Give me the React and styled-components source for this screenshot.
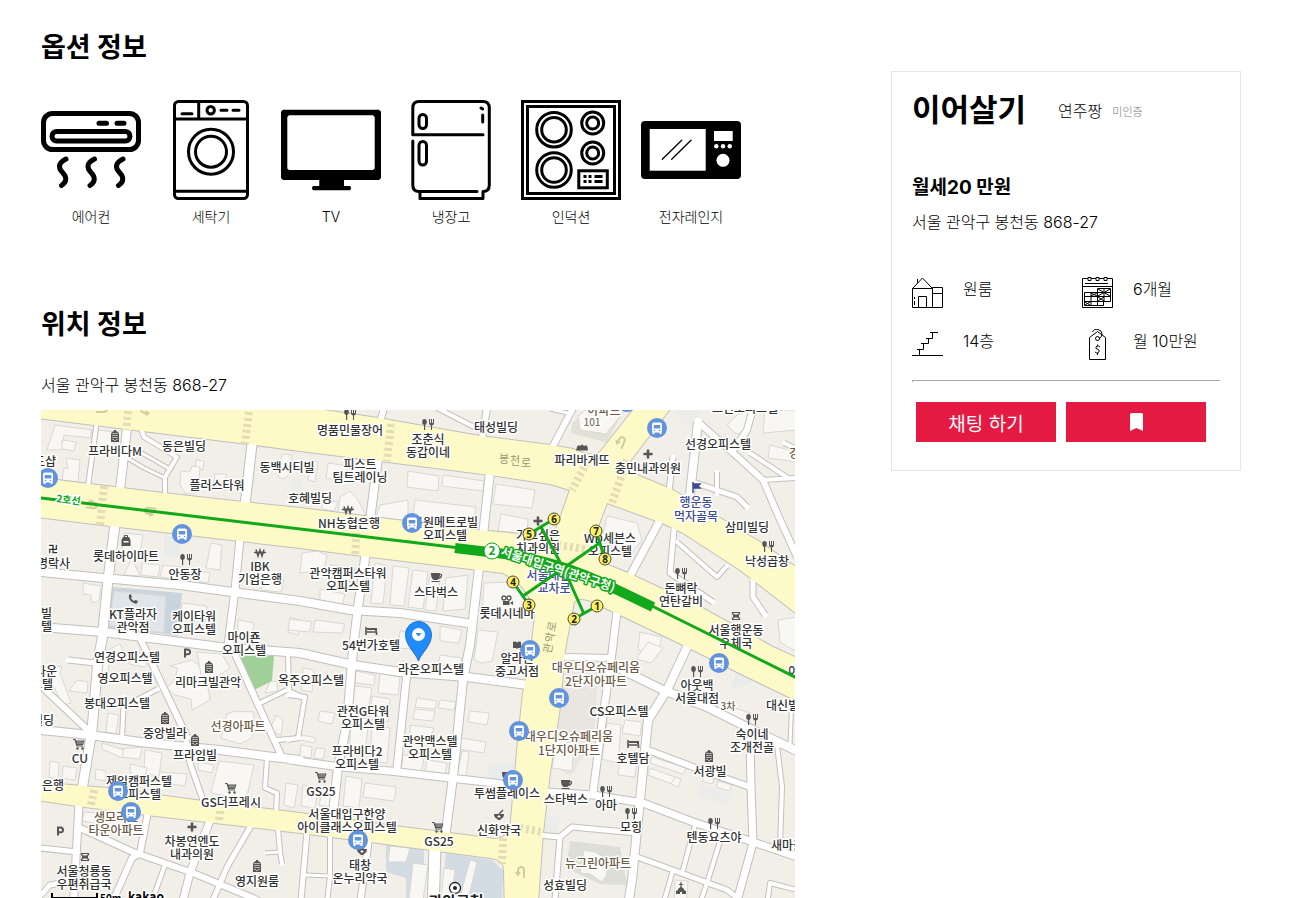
import React from "react";
import styled, { createGlobalStyle } from "styled-components";

const GlobalStyle = createGlobalStyle`
  *, *::before, *::after { box-sizing: border-box; }
  body {
    margin: 0;
    background: #fff;
    color: #000;
    font-family: Inter, "Noto Sans CJK KR", sans-serif;
    font-size: 16px;
    line-height: 24px;
  }
`;

/* ---------- page ---------- */

const Page = styled.div`
  display: grid;
  grid-template-columns: minmax(0, 1fr) 350px;
  column-gap: 96px;
  align-items: start;
  padding: 28px 59px 0 41px;
`;

const Main = styled.main`
  min-width: 0;
`;

const Section = styled.section`
  margin-bottom: ${(p) => (p.$last ? 0 : 78)}px;
`;

const SectionTitle = styled.h2`
  margin: 0;
  font-size: 27px;
  line-height: 40px;
  font-weight: 700;
`;

const OptionList = styled.ul`
  display: flex;
  flex-wrap: wrap;
  gap: 20px;
  margin: 32px 0 0;
  padding: 0;
  list-style: none;
`;

const Option = styled.li`
  display: flex;
  flex-direction: column;
  align-items: center;
  gap: 7px;
  width: 100px;
  font-size: 14px;
  line-height: 20px;
  font-weight: 300;
`;

const OptionIcon = styled.svg`
  display: block;
  width: 100px;
  height: 100px;
  fill: none;
  stroke: #000;
  stroke-width: ${(p) => p.$weight || 3};
  stroke-linecap: round;
  stroke-linejoin: round;
`;

const Address = styled.p`
  margin: ${(p) => p.$top}px 0 0;
  font-weight: 300;
`;

const MapFrame = styled.div`
  height: 500px;
  margin-top: 13px;
  overflow: hidden;
  background: #f2efe9;
`;

const MapCanvas = styled.svg`
  display: block;
  width: 100%;
  height: 100%;
`;

/* ---------- side card ---------- */

const Card = styled.aside`
  margin-top: 43px;
  padding: 17px 20px 28px;
  border: 1px solid #e6e6e6;
  font-weight: 300;
`;

const CardHeader = styled.header`
  display: flex;
  align-items: center;
  height: 42px;
`;

const CardTitle = styled.h1`
  margin: 0 32px 0 0;
  font-size: 31px;
  line-height: 40px;
  font-weight: 700;
`;

const Owner = styled.span`
  padding-top: 2px;
  margin-right: 10px;
`;

const Verified = styled.span`
  padding-top: 4px;
  color: #777;
  font-size: 11px;
`;

const Price = styled.h3`
  margin: 45px 0 0;
  font-size: 19px;
  line-height: 24px;
  font-weight: 700;
`;

const FactGrid = styled.ul`
  display: grid;
  grid-template-columns: 170px 1fr;
  row-gap: 20px;
  margin: 43px 0 19px;
  padding: 0;
  list-style: none;
`;

const Fact = styled.li`
  display: flex;
  gap: 19px;
  height: 32px;
`;

const FactIcon = styled.svg`
  width: 32px;
  height: 32px;
  fill: none;
  stroke: #000;
  stroke-width: 1;
`;

const Divider = styled.hr`
  margin: 0 0 20px;
  border: solid #a8a8a8;
  border-width: 1px 0 0 1px;
  height: 2px;
`;

const Actions = styled.div`
  display: flex;
  gap: 10px;
  padding-left: 4px;
`;

const ActionButton = styled.button`
  display: flex;
  align-items: center;
  justify-content: center;
  width: 140px;
  height: 40px;
  padding: 0;
  border: 0;
  background: #e51a43;
  color: #fff;
  font-family: inherit;
  font-size: 19px;
  cursor: pointer;
`;

/* ---------- map styling ---------- */

const Label = styled.text`
  font-family: "Noto Sans CJK KR", sans-serif;
  font-size: ${(p) => p.$size || 12}px;
  font-weight: ${(p) => p.$weight || 500};
  fill: ${(p) => p.$color || "#333"};
  stroke: ${(p) => p.$halo || "#fff"};
  stroke-width: 3px;
  stroke-linejoin: round;
  paint-order: stroke;
`;

const RoadName = styled.text`
  font-family: "Noto Sans CJK KR", sans-serif;
  font-size: 11px;
  fill: #9b976f;
  text-anchor: middle;
`;

const ExitNumber = styled.text`
  font-family: "Noto Sans", sans-serif;
  font-size: 10px;
  font-weight: 700;
  fill: #222;
  text-anchor: middle;
`;

/* Minor streets: [width, points] */
const STREETS = [
  [4, "97,420 88,486"], [8, "127,428 120,490"], [4, "141,428 144,437 177,457 165,477 165,496"],
  [3, "127,458 144,468 165,478"], [3, "140,452 168,468"], [9, "252,444 245,505"],
  [9, "115,524 108,580 102,640 98,660 92,730 82,790"], [7, "79,804 73,912"],
  [7, "240,538 235,590 228,645"],
  [8, "40,572 103,578 180,585 300,601 350,610 400,613 467,623"],
  [8, "40,627 103,632 220,647 300,653 353,665 400,672 467,677 528,685"],
  [6, "384,408 380,422"], [6, "487,408 482,438"], [4, "437,408 480,430"],
  [8, "378,458 370,520"], [8, "490,472 483,535"],
  [8, "366,552 358,607 353,650 347,723 338,767 332,822"],
  [8, "479,568 470,645 463,680 453,777 445,838"], [7, "407,672 397,768"],
  [7, "290,760 340,767 390,771 450,778 512,785"], [4, "288,695 305,697 298,738 288,740"],
  [11, "435,846 433,912"], [5, "307,832 300,912"], [4, "330,835 330,876 326,912"], [3, "306,875 330,876"],
  [6, "369,838 359,912"], [6, "40,685 90,732"], [5, "68,660 95,663"],
  [8, "40,730 90,735 140,742 187,747 220,750 273,757 300,760"],
  [4, "122,738 124,697"], [4, "137,700 158,689"], [6, "139,636 187,737"], [5, "186,740 190,763 205,806"],
  [6, "230,643 281,755"], [4, "277,740 300,738"], [4, "260,703 287,690 304,698"], [4, "289,690 288,656"],
  [4, "267,758 265,788 277,793 276,814"], [4, "278,828 280,852 282,864"], [3, "265,853 280,852"],
  [6, "78,827 133,852 193,873 253,898 280,912"], [5, "40,848 77,852"], [6, "148,812 140,853 132,858 108,912"],
  [7, "211,818 190,873 180,912"], [5, "252,824 227,867 208,912"], [4, "165,865 148,912"], [5, "76,880 50,885 40,896"],
  [6, "573,408 553,446"], [3, "550,409 572,414"], [5, "673,457 669,492"], [8, "698,422 690,494"],
  [6, "698,422 730,450 763,480 778,515 797,557"], [4, "763,480 797,478"], [4, "750,453 788,478"],
  [6, "753,408 747,430 732,452"], [4, "784,443 797,449"], [5, "693,482 737,497 747,507"], [4, "717,494 717,472"],
  [5, "674,530 670,573 713,602"], [4, "677,542 717,577 727,566"], [7, "659,522 630,576"],
  [5, "753,580 753,597 765,615"], [7, "617,611 612,653 602,723 593,793"], [6, "566,657 610,658"],
  [8, "612,665 663,690 707,707 753,730 797,751"],
  [8, "689,643 667,690 648,720 646,740 640,800 632,880 627,912"],
  [6, "648,750 693,767 750,787"], [7, "750,738 751,787 753,843 734,912"], [4, "777,745 782,787 780,847"],
  [7, "546,792 593,795 643,803 693,822 753,842 797,857"], [5, "538,835 560,837 572,827 636,833"],
  [5, "560,837 554,912"], [5, "637,857 673,870 727,890 738,898"], [4, "695,825 683,870"], [4, "673,870 661,912"],
  [4, "722,835 708,880 697,912"], [4, "766,912 770,883 797,890"], [3, "792,695 790,745"],
];

const BOULEVARDS = [
  "M36 405H290L378 418 480 436 550 445 573 449Q592 458 600 452L637 405H673L627 465 630 472 673 490 727 522 760 542 797 568V614L740 570 683 533 662 523 607 503 596 532 603 563 628 573 697 605 773 647 797 658V701L737 672 683 645 620 615 603 607 Q580 594 574 602L565 650 560 707 550 773 543 833 537 915H505L504 870Q504 859 490 858L430 850 370 842 300 833 147 815 77 806 36 800V782L107 788 195 800 300 813 387 825 450 833 495 839Q510 838 511 820L518 740 523 693 530 660 535 615Q532 595 515 580L503 573 470 569 362 556 300 548 240 541 110 526 36 517V477L57 480 163 493 243 502 300 508 373 517 477 530 520 534Q550 536 557 527L570 490 550 484 490 475 380 461 300 451 240 443 36 418Z",
];

const ZONES = [
  ["#c9d4dc", "112,587 182,593 178,636 165,634 108,628"],
  ["#a0cf98", "236,655 274,656 272,681 254,690"],
  ["#d3dce3", "386,845 424,849 424,900 406,912 406,878 386,872"],
  ["#d3dce3", "446,853 492,860 503,870 502,912 440,912"],
  ["#dddfd6", "570,841 620,847 627,885 600,884 566,868"],
  ["#e0e1d7", "572,424 590,405 627,405 606,443 598,440 571,433"],
  ["#e9eceb", "164,535 182,538 178,558 164,556"], ["#e9eceb", "738,668 742,662 759,680 730,690"],
  ["#e9eceb", "488,765 514,762 512,781 489,779"], ["#e9e6e1", "566,668 598,672 594,742 570,776 552,764"],
  ["#ecedea", "545,815 560,818 557,834 543,832"], ["#ecedea", "700,785 732,794 725,806 697,796"],
  ["#ecedea", "675,410 700,410 697,430 683,424"], ["#ecedea", "293,478 303,480 300,500 289,498"],
];

const BUILDINGS = [
  "55,425 92,430 90,438 64,435 62,450 47,450", "62,440 76,442 74,451 62,449", "66,458 80,460 78,482 62,480 64,468 68,468",
  "98,430 116,432 113,452 96,446", "196,460 204,461 203,470 195,469", "181,471 190,472 192,466 200,467 198,492 186,494 180,485",
  "215,474 226,474 226,490 213,489", "282,454 292,455 291,471 285,479 278,477", "310,460 318,462 315,482 308,480",
  "328,463 348,466 344,481 326,478", "408,471 439,476 438,491 407,487", "443,475 484,481 483,491 442,486",
  "415,500 476,507 474,519 413,516", "380,505 408,500 408,521 376,517", "496,484 535,490 532,508 493,504", "501,514 528,519 527,534 498,531",
  "340,497 350,491 358,500 366,516 338,512", "322,500 338,502 334,511 322,509", "142,563 160,565 158,577 141,575",
  "124,533 143,535 140,553 122,552", "132,558 140,576 124,575", "163,565 190,568 190,581 160,577", "194,570 210,573 208,583 192,580",
  "211,543 222,545 220,570 206,568", "83,583 101,586 99,601 92,603 91,595 83,594", "114,591 166,596 164,633 109,625",
  "182,603 207,606 206,620 181,614", "238,620 254,623 252,638 238,637", "290,617 300,620 298,635 288,632", "265,577 284,580 281,592 261,590",
  "302,553 317,551 327,555 324,570 300,573", "330,565 355,568 352,582 329,577", "320,589 345,594 342,607 320,603",
  "375,563 387,566 383,604 371,603", "393,566 409,568 404,606 390,605", "413,570 428,572 423,609 408,607",
  "430,574 440,576 436,611 425,610", "446,578 468,575 465,609 443,611", "484,583 508,582 525,595 525,617 482,615",
  "290,619 312,622 309,632 288,630", "315,620 345,624 342,633 313,632", "400,631 430,635 426,650 398,648",
  "440,626 462,630 459,643 440,641", "440,655 462,658 458,674 437,670", "478,630 498,632 492,661 482,663 474,660",
  "50,665 62,667 60,673 71,703 63,705 54,687 45,682", "77,680 88,682 87,693 69,691", "108,713 119,715 116,734 106,732",
  "98,655 120,644 124,653 110,660 106,681 98,680", "130,650 150,655 145,667 129,664", "170,666 178,668 174,681 167,688 175,695 191,699 192,710 210,700 205,670 192,660",
  "197,652 222,654 230,668 211,680 201,675", "270,682 277,681 278,691 265,693", "120,749 142,747 140,759 120,757", "102,743 124,750 122,758 102,749",
  "145,750 162,753 159,776 144,773", "198,762 214,765 212,773 198,770", "219,761 254,765 246,800 211,793",
  "286,783 298,785 294,808 284,805", "50,761 59,763 58,779 49,777", "63,766 77,768 75,780 62,778", "96,769 106,771 105,781 95,779",
  "130,764 147,768 144,780 131,779", "160,772 187,774 185,786 157,782", "227,714 235,711 254,712 252,738 240,744 221,738",
  "276,715 283,720 281,735 270,730", "84,812 100,813 98,824 82,821", "303,668 314,670 312,692 301,690", "320,711 335,713 332,724 318,721",
  "356,671 375,675 374,685 355,683", "380,673 400,677 398,695 378,693", "355,686 372,688 368,710 352,708", "372,696 390,699 388,722 370,719",
  "350,715 369,719 365,753 350,752", "372,726 390,728 387,763 370,761", "417,698 437,701 435,709 415,707", "440,700 456,702 454,710 438,708",
  "415,709 435,711 433,721 413,719", "410,725 434,728 430,738 410,735", "403,755 424,757 421,773 401,772", "427,760 447,763 445,774 425,772",
  "470,711 489,713 487,725 468,722", "461,738 486,742 484,753 458,749", "462,751 469,752 466,778 457,776",
  "302,735 316,738 314,743 301,740", "301,745 312,747 311,758 300,756", "316,748 325,749 323,759 314,758",
  "346,776 362,779 359,808 343,806", "365,783 396,787 394,801 363,797", "303,785 318,789 315,808 301,806", "322,795 332,797 329,807 319,805",
  "578,416 592,405 625,410 606,434 580,430", "637,523 642,540 630,555 602,538 607,516", "770,445 797,452 797,462 768,458", "765,410 797,410 797,430 763,433",
  "727,425 737,415 753,410 746,435 735,433", "640,632 662,637 657,657 638,650", "648,642 663,648 651,663 636,659",
  "778,620 797,617 797,652 780,642", "625,720 642,722 640,736 622,733", "607,723 621,725 618,763 602,759", "620,758 637,760 635,777 618,775",
  "652,757 686,768 683,774 650,763", "650,768 675,777 672,784 648,775", "675,777 681,779 678,787 671,784", "705,776 714,779 712,784 702,781",
  "718,781 732,785 729,791 716,787", "719,703 750,713 748,722 716,712", "556,740 574,743 572,771 552,768", "584,850 595,852 605,858 607,874 602,882 590,874 580,873",
  "390,846 410,848 406,862 388,862", "413,863 428,865 422,908 408,908", "444,868 455,870 450,908 440,908", "470,860 477,862 466,908 457,908", "675,880 688,881 686,908 674,908",
];

/* The telephone company's plot is tinted differently from other buildings. */
const TINTED_BUILDING = 25;

const CROSSWALKS = [
  "128,411 126,430", "249,412 245,444", "104,486 100,525", "391,424 387,461", "357,527 355,557",
  "587,462 572,490", "627,460 612,503", "558,545 590,550", "94,790 91,805", "220,811 219,822", "520,828 543,832", "503,838 502,864",
];

const INK = "#333";
const BROWN = "#6d5c48";
const NAVY = "#3f4b93";

/* Place names: [x, y of the first line's centre, lines, colour, anchor] */
const PLACES = [
  [350, 430, ["명품민물장어"]], [428, 439, ["조춘식", "동갑이네"]], [496, 427, ["태성빌딩"]], [184, 446, ["동은빌딩"]],
  [115, 451, ["프라비다M"]], [217, 485, ["플러스타워"]], [287, 467, ["동백시티빌"]], [360, 464, ["피스트", "팀트레이닝"]],
  [310, 498, ["호혜빌딩"]], [349, 523, ["NH농협은행"]], [445, 522, ["분원메트로빌", "오피스텔"]],
  [348, 573, ["관악캠퍼스타워", "오피스텔"]], [436, 592, ["스타벅스"]], [507, 613, ["롯데시네마"]], [371, 645, ["54번가호텔"]],
  [431, 669, ["라온오피스텔"]], [582, 460, ["파리바게뜨"]], [648, 468, ["충민내과의원"]], [718, 444, ["선경오피스텔"]],
  [696, 502, ["행운동", "먹자골목"], NAVY, "middle", 14], [747, 527, ["삼미빌딩"]], [767, 561, ["낙성곱창"]], [681, 588, ["돈뼈락", "연탄갈비"]],
  [736, 630, ["서울행운동", "우체국"]], [610, 538, ["WD세븐스", "오피스텔"]], [538, 535, ["가고싶은", "치과의원"]],
  [554, 575, ["서울대입구", "교차로"], NAVY], [126, 556, ["롯데하이마트"]], [185, 574, ["안동장"]], [260, 566, ["IBK", "기업은행"]],
  [70, 563, ["명락사"], INK, "end"], [133, 614, ["KT플라자", "관악점"]], [194, 616, ["케이타워", "오피스텔"]], [244, 637, ["마이죤", "오피스텔"]],
  [56, 461, ["도샵"], INK, "end"], [52, 613, ["스빌", "스텔"], INK, "end"], [57, 671, ["타운"], INK, "end"], [53, 684, ["스텔"], INK, "end"],
  [54, 720, ["빌딩"], INK, "end"], [64, 785, ["업은행"], INK, "end"],
  [127, 657, ["연경오피스텔"]], [125, 678, ["영오피스텔"]], [117, 703, ["봉대오피스텔"]], [208, 682, ["리마크빌관악"]], [311, 680, ["옥주오피스텔"]],
  [165, 733, ["중앙빌라"]], [238, 726, ["선경아파트"], BROWN], [195, 755, ["프라임빌"]], [80, 758, ["CU"]], [139, 781, ["제일캠퍼스텔", "오피스텔"]],
  [116, 817, ["생모리츠", "타운아파트"], BROWN], [231, 802, ["GS더프레시"]], [192, 841, ["차봉연엔도", "내과의원"]],
  [84, 871, ["서울청룡동", "우편취급국"]], [257, 881, ["영지원룸"]], [363, 711, ["관전G타워", "오피스텔"]], [357, 751, ["프라비다2", "오피스텔"]],
  [430, 741, ["관악맥스텔", "오피스텔"]], [321, 791, ["GS25"]], [347, 814, ["서울대입구한양", "아이클래스오피스텔"]],
  [360, 865, ["태창", "온누리약국"]], [439, 841, ["GS25"]], [499, 830, ["신화약국"]], [507, 793, ["투썸플레이스"]], [517, 658, ["알라딘", "중고서점"]],
  [596, 667, ["대우디오슈페리움", "2단지아파트"], BROWN, "middle", 14], [619, 711, ["CS오피스텔"]],
  [569, 736, ["대우디오슈페리움", "1단지아파트"], BROWN, "middle", 14],
  [633, 758, ["호텔담"]], [566, 799, ["스타벅스"]], [606, 805, ["아마"]], [631, 827, ["모힝"]], [710, 771, ["서광빌"]], [714, 837, ["텐동요츠야"]],
  [771, 845, ["새마을"], INK, "start"], [697, 685, ["아웃백", "서울대점"]], [752, 734, ["숙이네", "조개전골"]], [766, 705, ["대신빌딩"], INK, "start"],
  [598, 863, ["뉴그린아파트"], BROWN], [565, 885, ["성효빌딩"]], [604, 410, ["아파트"], BROWN], [745, 408, ["그린오피스텔"]],
  [789, 453, ["강"], BROWN, "start"], [788, 671, ["이"], INK, "start"],
];

const POIS = {
  food: [[350, 414], [428, 424], [186, 559], [768, 546], [681, 573], [697, 671], [752, 719], [606, 791], [631, 813], [714, 823]],
  tower: [[115, 436], [209, 667], [165, 718], [195, 740], [257, 866], [709, 756]],
  cart: [[79, 744], [231, 788], [321, 777], [438, 827]],
  cup: [[436, 577], [566, 784], [507, 776]],
  bed: [[371, 631], [633, 744]],
  cross: [[648, 454], [192, 827], [538, 521]],
  won: [[348, 510], [260, 553]],
  phone: [[133, 599]],
  parking: [[187, 653], [60, 831]],
  post: [[85, 857], [736, 616]],
  film: [[507, 600]],
  mortar: [[499, 815], [362, 850]],
  book: [[517, 645]],
  church: [[681, 888]],
  store: [[126, 541]],
  bread: [[582, 447]],
};

const BUS_STOPS = [
  [627, 402], [48, 478], [182, 534], [412, 523], [657, 428], [530, 650], [719, 663], [559, 698], [519, 731], [513, 780],
  [118, 791], [131, 812], [358, 840],
];

const EXITS = [[1, 597, 606], [2, 574, 619], [3, 529, 605], [4, 513, 582], [5, 529, 534], [6, 554, 519], [7, 596, 531], [8, 605, 559]];

function PoiSymbols() {
  return (
    <defs>
      <g id="food" fill="#555" stroke="none">
        <ellipse cx="-3.5" cy="-2" rx="2.3" ry="3" />
        <path d="M-4 0h1.2v6H-4zM1-5h1v4h1v-4h1v4h1v-4h1v4Q6 1 4 1.500V6H3V1.500Q1 1 1-1z" />
      </g>
      <g id="tower">
        <path d="M-4 6V-2L-3-4-1-5V-6H1V-5L3-4 4-2V6Z" fill="#555" />
        <path d="M-2.500-2.500h1.200M-.6-2.500h1.200M1.300-2.500h1.200M-2.500-.5h1.200M-.6-.5h1.200M1.300-.5h1.200M-2.500 1.500h1.200M-.6 1.500h1.200M1.300 1.500h1.200M-2.500 3.500h1.200M1.300 3.500h1.200M-.6 4.500h1.200" stroke="#f2efe9" strokeWidth="1.200" />
      </g>
      <g id="cart">
        <path d="M-6-4.500H-4L-2 2H4" fill="none" stroke="#555" strokeWidth="1.200" />
        <path d="M-3.500-3.500H5.500L4 1H-2Z" fill="#555" />
        <path d="M-1-3V0M1-3V0M3-3V0" stroke="#eee" strokeWidth=".6" />
        <circle cx="-1.500" cy="4.500" r="1.200" fill="#555" /><circle cx="3.500" cy="4.500" r="1.200" fill="#555" />
      </g>
      <g id="cup">
        <path d="M-5-4H4Q4 2 1 3H-2Q-5 2-5-4Z" fill="#555" />
        <path d="M3-3Q6-3 5.500-1T2 1.500M-4.500 4.500H3.500" fill="none" stroke="#555" strokeWidth="1.200" />
      </g>
      <g id="bed" fill="none" stroke="#555">
        <path d="M-5-4V4" strokeWidth="1.600" /><path d="M-5 1H5.500V4" strokeWidth="1.600" /><path d="M-4-2H5V0" strokeWidth="2" />
      </g>
      <path id="cross" d="M-4.500 0H4.500M0-4.500V4.500" stroke="#555" strokeWidth="2.500" />
      <g id="won" fill="none" stroke="#555" strokeWidth="1.500">
        <path d="M-4-3.500L-2 3 0-3 2 3 4-3.500" /><path d="M-6 -.5H6" />
      </g>
      <path id="phone" d="M-4-4Q-5 0-1 3T4 4L5 2 2.500 1 1 2Q-1 1-2-1L-1-2.500-2.500-5Z" fill="#555" />
      <path id="parking" d="M-2 4.500V-3.500H.5Q3-3.500 3-1T.5 1.300H-2" fill="none" stroke="#555" strokeWidth="2" />
      <g id="post" fill="none" stroke="#555">
        <path d="M-4-3L-2-1M4-3L2-1M-4 3L-2 1M4 3L2 1M-4-3.500H4M-4 3.500H4" strokeWidth="1.200" /><path d="M-3 0H3" strokeWidth="3" />
      </g>
      <g id="film">
        <circle cx="-3" cy="-2" r="2" fill="none" stroke="#555" strokeWidth="1.400" /><circle cx="2" cy="-2" r="2" fill="none" stroke="#555" strokeWidth="1.400" />
        <path d="M-4 1H2.500V5H-4ZM3 3L6 1V5Z" fill="#555" />
      </g>
      <g id="mortar">
        <path d="M-5-1H5Q5 3 1.500 4V5H-1.500V4Q-5 3-5-1Z" fill="#555" /><path d="M0-1L4-5" stroke="#555" strokeWidth="1.500" />
        <path d="M-1.500 1.500H1.500M0 0V3" stroke="#fff" strokeWidth="1" />
      </g>
      <path id="book" d="M-4-3Q-2-4 0-2.500 2-4 4-3V3H1L0 4-1 3H-4Z" fill="#555" />
      <path id="church" d="M-.6-6H.6V-4H2V-3H.6V-1L3 1V2L5 3V6H1V4H-1V6H-5V3L-3 2V1L-.6-1V-3H-2V-4H-.6Z" fill="#555" />
      <g id="store">
        <path d="M-4.500-1L-3-4H3L4.500-1V5H-4.500Z" fill="#555" /><path d="M-1.500-4V-5.500H1.500V-4" fill="none" stroke="#555" />
        <path d="M-2.500 0H2.500V1.500H-2.500Z" fill="#fff" />
      </g>
      <path id="bread" d="M-6 3.500L-5 0Q-4-3-2-1 0-4 2-1 5-3 5.500 0L6 3.500Z" fill="#555" />
      <g id="bus">
        <circle r="10" fill="#6293dc" />
        <rect x="-5" y="-5.500" width="10" height="10" rx="2" fill="#fff" />
        <path d="M-3.300-3H3.300V.5H-3.300Z" fill="#6293dc" />
        <path d="M-3.500 4V6M3.500 4V6" stroke="#fff" strokeWidth="2" />
        <path d="M-3.300 2.500H-1.800M1.800 2.500H3.300" stroke="#6293dc" />
      </g>
      <g id="uturn" fill="none" stroke="#d3cd9e" strokeWidth="2">
        <path d="M3 6V-1Q3-5 0-5T-3-1V2" /><path d="M-5 0L-3 3-1 0" />
      </g>
    </defs>
  );
}

function NeighbourhoodMap() {
  return (
    <MapCanvas viewBox="41 410 754 500" preserveAspectRatio="xMinYMin slice" role="img" aria-label="서울 관악구 봉천동 868-27 지도">
      <PoiSymbols />
      <rect x="0" y="380" width="900" height="560" fill="#f2efe9" />
      {ZONES.map(([fill, pts]) => <polygon key={pts} points={pts} fill={fill} />)}
      <g fill="#f8f7f4" stroke="#dad8d3" strokeWidth="1">
        {BUILDINGS.map((pts, i) => <polygon key={i} points={pts} fill={i === TINTED_BUILDING ? "#e0e5e9" : undefined} />)}
      </g>
      <g fill="none" stroke="#c2c0bc" strokeLinejoin="round">
        {STREETS.map(([w, pts], i) => <polyline key={i} points={pts} strokeWidth={w + 2} />)}
        {BOULEVARDS.map((d) => <path key={d} d={d} strokeWidth="2" />)}
      </g>
      <g fill="none" stroke="#fff" strokeLinejoin="round" strokeLinecap="round">
        {STREETS.map(([w, pts], i) => <polyline key={i} points={pts} strokeWidth={w} />)}
      </g>
      {BOULEVARDS.map((d) => <path key={d} d={d} fill="#fefac8" />)}
      <g fill="none" stroke="#e3dcb4" strokeWidth="8" strokeDasharray="3 3">
        {CROSSWALKS.map((pts) => <polyline key={pts} points={pts} />)}
      </g>
      <use href="#uturn" transform="translate(621 442) rotate(25)" />
      <use href="#uturn" transform="translate(521 872)" />
      <use href="#uturn" transform="translate(150 511) rotate(-82)" />
      <use href="#uturn" transform="translate(92 505) rotate(98)" />
      <use href="#uturn" transform="translate(146 410) rotate(-80)" />
      <use href="#uturn" transform="translate(102 409) rotate(90)" />

      <RoadName x="504" y="463">봉</RoadName>
      <RoadName x="515" y="465">천</RoadName>
      <RoadName x="526" y="467">로</RoadName>
      <RoadName transform="translate(556 627) rotate(-80)">로</RoadName>
      <RoadName transform="translate(554 638) rotate(-80)">악</RoadName>
      <RoadName transform="translate(552 649) rotate(-80)">관</RoadName>

      {Object.entries(POIS).map(([kind, spots]) =>
        spots.map(([x, y]) => <use key={kind + x + y} href={"#" + kind} x={x} y={y} />)
      )}
      <path d="M693 482V493M693 484H700L698 486 700 488H693" fill={NAVY} stroke={NAVY} strokeWidth="1.500" />
      <Label x="53" y="553" textAnchor="middle" $size={10} $weight={700}>卍</Label>

      {PLACES.map(([x, y, lines, color, anchor, step]) =>
        lines.map((line, i) => (
          <Label key={line + x + y} x={x} y={y + 5 + i * (step || 13)} textAnchor={anchor || "middle"} $color={color}>
            {line}
          </Label>
        ))
      )}
      <Label x="592" y="426" textAnchor="middle" $size={10} $color="#7f7468">101</Label>
      <Label x="728" y="710" textAnchor="middle" $size={10} $color={BROWN}>3차</Label>

      <g fill="none" stroke="#12a81b">
        <path d="M41 498L460 548" strokeWidth="3" />
        <path d="M648 604L797 678" strokeWidth="3" />
        <path d="M529 534L554 519M541 527L560 562M596 531L605 559M601 542L565 567L523 596M513 582L529 605M568 578L584 614M574 619L597 606" strokeWidth="3" />
        <path d="M455 548L505 554Q560 562 605 584L653 607" strokeWidth="10" />
      </g>
      <Label transform="translate(56 502) rotate(7)" $size={10} $weight={700} $color="#12a81b">2호선</Label>
      <circle cx="492" cy="551" r="8" fill="#fff" stroke="#12a81b" strokeWidth="1" />
      <Label x="492" y="555" textAnchor="middle" $weight={700} $color="#12a81b">2</Label>
      <Label transform="translate(500 555) rotate(18)" $size={12} $weight={700} $color="#fff" $halo="#12a81b">서울대입구역(관악구청)</Label>
      {EXITS.map(([n, x, y]) => (
        <g key={n}>
          <circle cx={x} cy={y} r="6" fill="#fdf160" stroke="#4b4a30" />
          <ExitNumber x={x} y={y + 4}>{n}</ExitNumber>
        </g>
      ))}

      {BUS_STOPS.map(([x, y]) => <use key={x + "-" + y} href="#bus" x={x} y={y} />)}

      <path d="M418.500 661C416 653 405.500 646 405.500 634.500A13 13 0 0 1 431.500 634.500C431.500 646 421 653 418.500 661Z" fill="#228bfb" stroke="#176fd0" />
      <circle cx="418.500" cy="634.500" r="6.500" fill="#fff" />
      <path d="M415.500 633H421.500L418.500 636.500Z" fill="#228bfb" />

      <circle cx="455" cy="888" r="5.500" fill="#fff" stroke="#222" strokeWidth="1.300" />
      <circle cx="455" cy="888" r="2" fill="#222" />
      <Label x="456" y="907" textAnchor="middle" $size={15} $weight={700} $color="#222">관악구청</Label>

      <path d="M52 893V898H97V893" fill="none" stroke="#000" strokeWidth="2" />
      <Label x="100" y="902" $size={10} $weight={700} $color="#000">50m</Label>
      <Label x="128" y="901" $size={12} $weight={700} $color="#000">kakao</Label>
    </MapCanvas>
  );
}

/* ---------- option icons ---------- */

const OPTIONS = [
  ["에어컨", 5, <>
    <rect x="2.500" y="13.500" width="95" height="36" rx="9" />
    <rect x="11" y="31.500" width="78" height="9.500" rx="4.700" />
    <path d="M58 23.300H65.500M76 23.300H83" />
    {[0, 28.500, 57].map((dx) => <path key={dx} d="M25 59C17 63 17 68 21.500 72.500S26 82 20.500 85.500" transform={`translate(${dx} 0)`} />)}
  </>],
  ["세탁기", 3, <>
    <rect x="13.500" y="1.500" width="73" height="97" rx="4" />
    <path d="M14 19H86M37.700 2V19M21 13.700H31M60 10.300H66M72 10.300H78M14 91.300H86" />
    <circle cx="49.700" cy="10.300" r="3.700" /><circle cx="50" cy="51.700" r="22.500" /><circle cx="50" cy="51.700" r="15.500" />
  </>],
  ["TV", 1, <>
    <path fill="#000" stroke="none" fillRule="evenodd" d="M2 9.700H98L100 11.700V78L98 80H63V86H69Q71 88 69 90.300H32Q30 88 32 86H38.300V80H2L0 78V11.700ZM8 15.300L6.300 17V68.500L8 70H92L93.700 68.500V17L92 15.300Z" />
  </>],
  ["냉장고", 3, <>
    <path d="M82 34.700H11.800V8Q11.800 1.500 18 1.500H82Q88.300 1.500 88.300 8V85Q88.300 91.500 82 91.500V98.500H19V91.500M11.800 41V85Q11.800 91.500 18 91.500H76" />
    <rect x="18" y="14.500" width="7.500" height="14" rx="3.700" /><rect x="18" y="41.500" width="7.500" height="23.500" rx="3.700" />
    <path d="M81.700 15V22M80 8L81.700 9" />
  </>],
  ["인덕션", 3, <>
    <g strokeLinejoin="miter"><rect x="1.500" y="1.500" width="97" height="97" /><rect x="6.500" y="6.500" width="87" height="87" /><rect x="57.800" y="70.800" width="28.500" height="17" /></g>
    {[29.700, 70].map((y) => <g key={y}><circle cx="33" cy={y} r="17.300" /><circle cx="33" cy={y} r="12.300" /></g>)}
    {[23, 53].map((y) => <g key={y}><circle cx="71.700" cy={y} r="11" /><circle cx="71.700" cy={y} r="6" /></g>)}
    <path strokeLinecap="butt" d="M62.500 76.500H65.500M67.500 76.500H70.500M73.500 76.500H81.500M62.500 81.500H65.500M67.500 81.500H70.500M73.500 81.500H81.500" />
  </>],
  ["전자레인지", 1, <>
    <rect x="0" y="21" width="100" height="58" rx="4" fill="#000" stroke="none" />
    <g fill="#fff" stroke="none">
      <rect x="8.700" y="29" width="56" height="41.700" /><rect x="73" y="31" width="18.700" height="10" />
      <circle cx="75.300" cy="46.300" r="2.200" /><circle cx="82" cy="46.300" r="2.200" /><circle cx="88.700" cy="46.300" r="2.200" /><circle cx="82" cy="60.300" r="6.500" />
    </g>
    <path d="M40.700 40.300L21.300 59.300M50 40.300L30.700 59.300" strokeWidth="1.300" />
  </>],
];

/* ---------- card icons ---------- */

const FACTS = [
  ["원룸", <>
    <path d="M.5 11.500L10.500 1 20.500 11.500M5.500 6V2M.5 11.500V30.500H30.500V10.500H20.500V30.500M.5 11.500H20.500M20.500 16.500H30.500M6.500 30.500V19.500H14.500V30.500M2.500 20V22M2.500 24V28" />
  </>],
  ["6개월", <>
    <path d="M.5 1.500H30.500V30.500H.5ZM3 6.500H26M.5 9.500H30.500" />
    <path d="M6 .5H9V3.500H6ZM14 .5H17V3.500H14ZM22 .5H25V3.500H22Z" fill="#fff" />
    <path d="M15.500 11.500H28.500V24.500H21.500V28.500H2.500V15.500H28.500M2.500 19.500H28.500M2.500 24.500H22M9 15.500V28.500M15.500 11.500V28.500M22 11.500V24.500M16 12L28 19M28 12L16 19M9 16L15 19M15 16L9 19M3 25L8 28M8 25L3 28M16 20L22 24M22 20L16 24" />
  </>],
  ["14층", <>
    <path d="M0 26.500H31M7.500 26V20.500M5 20.500H11.500V14.500M9 14.500H16.500V9.500M14 9.500H20.500V3.500M18 3.500H26" />
  </>],
  ["월 10만원", <>
    <path d="M7.500 30.500V8.500L15.500 2.500 23.500 8.500V30.500ZM10.500 3Q12-.5 16 .5T20 5Q20 8 17 10" /><circle cx="15.500" cy="9.500" r="2" />
    <path d="M18 18Q16.500 16.500 15 17T14 19.500L16.500 20.500Q18 22 16.500 23.500T13 23M15.500 15.500V17M15.500 24V26" />
  </>],
];

export default function App() {
  return (
    <>
      <GlobalStyle />
      <Page>
        <Main>
          <Section>
            <SectionTitle>옵션 정보</SectionTitle>
            <OptionList>
              {OPTIONS.map(([name, weight, art]) => (
                <Option key={name}>
                  <OptionIcon viewBox="0 0 100 100" $weight={weight} aria-hidden="true">{art}</OptionIcon>
                  <span>{name}</span>
                </Option>
              ))}
            </OptionList>
          </Section>
          <Section $last>
            <SectionTitle>위치 정보</SectionTitle>
            <Address $top={28}>서울 관악구 봉천동 868-27</Address>
            <MapFrame>
              <NeighbourhoodMap />
            </MapFrame>
          </Section>
        </Main>

        <Card>
          <CardHeader>
            <CardTitle>이어살기</CardTitle>
            <Owner>연주짱</Owner>
            <Verified>미인증</Verified>
          </CardHeader>
          <Price>월세20 만원</Price>
          <Address $top={10}>서울 관악구 봉천동 868-27</Address>
          <FactGrid>
            {FACTS.map(([text, art]) => (
              <Fact key={text}>
                <FactIcon viewBox="0 0 32 32" aria-hidden="true">{art}</FactIcon>
                <span>{text}</span>
              </Fact>
            ))}
          </FactGrid>
          <Divider />
          <Actions>
            <ActionButton type="button">채팅 하기</ActionButton>
            <ActionButton type="button" aria-label="북마크">
              <svg width="13" height="18" viewBox="0 0 13 18" aria-hidden="true">
                <path d="M1.500 0H11.500Q13 0 13 1.500V18L6.500 15 0 18V1.500Q0 0 1.500 0Z" fill="#fff" />
              </svg>
            </ActionButton>
          </Actions>
        </Card>
      </Page>
    </>
  );
}
